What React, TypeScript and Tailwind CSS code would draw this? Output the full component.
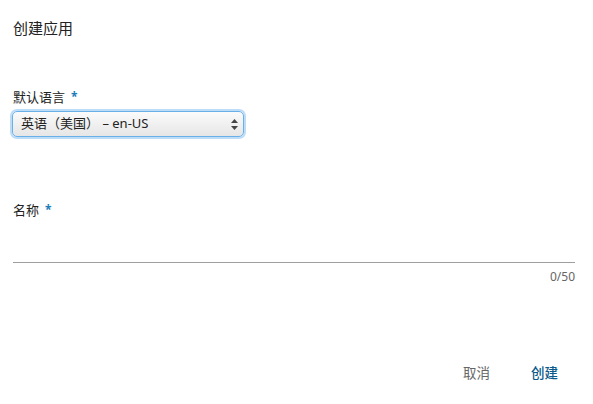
export default function App() {
    const font = { fontFamily: '"Noto Sans", "Noto Sans CJK SC", sans-serif' }

    return (
        <div className="w-[593px] h-[404px] bg-white text-[#222]" style={font}>
            <div className="px-[13px] pt-[17px]">
                {/* Title */}
                <h1 className="text-[15px] leading-[22px] text-[#222]">创建应用</h1>

                {/* Language */}
                <div className="mt-[49px]">
                    <label className="text-[13px] leading-[18px] flex items-center gap-[6px]">
                        默认语言
                        <span className="text-[#1a7db8] font-bold text-[12px]">*</span>
                    </label>
                    <div className="relative mt-[5px] w-[232px] -ml-[1px]">
                        <div className="h-[26px] rounded-[5px] border border-[#6ab0e8] shadow-[0_0_0_2px_#bcdcf7] bg-gradient-to-b from-[#fbfbfb] to-[#e6e6e6] flex items-center pl-[8px] text-[13px] text-[#222]">
                            英语（美国） – en-US
                        </div>
                        <svg className="absolute right-[6px] top-[8px]" width="7" height="11" viewBox="0 0 7 11">
                            <path d="M3.5 0 L7 4 L0 4 Z" fill="#444" />
                            <path d="M3.5 11 L7 7 L0 7 Z" fill="#444" />
                        </svg>
                    </div>
                </div>

                {/* Name */}
                <div className="mt-[64px]">
                    <label className="text-[13px] leading-[18px] flex items-center gap-[6px]">
                        名称
                        <span className="text-[#1a7db8] font-bold text-[12px]">*</span>
                    </label>
                    <div className="mt-[43px] border-b border-[#9e9e9e] w-[562px]" />
                    <div className="w-[562px] text-right text-[12px] leading-[16px] text-[#666] mt-[6px]">0/50</div>
                </div>

                {/* Actions */}
                <div className="mt-[78px] flex justify-end gap-[41px] pr-[22px] text-[13.5px]">
                    <button className="text-[#666]">取消</button>
                    <button className="text-[#0b5a8c] font-medium">创建</button>
                </div>
            </div>
        </div>
    )
}
